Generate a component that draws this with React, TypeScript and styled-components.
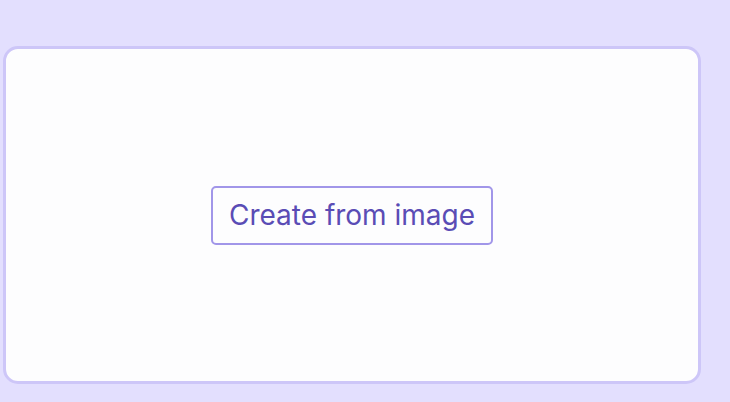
import React from "react";
import styled, { createGlobalStyle } from "styled-components";

const Global = createGlobalStyle`
  html, body { margin: 0; padding: 0; }
  body {
    background: #e3dffe;
    font-family: Inter, "Noto Sans", sans-serif;
    width: 730px;
    height: 402px;
    overflow: hidden;
  }
`;

const Page = styled.div`
  padding: 46px 29px 0 3px;
`;

const Card = styled.div`
  box-sizing: border-box;
  width: 698px;
  height: 338px;
  background: #fdfdfe;
  border: 3px solid #cdc6f8;
  border-radius: 15px;
  display: flex;
  align-items: center;
  justify-content: center;
`;

const Button = styled.button`
  box-sizing: border-box;
  height: 59px;
  width: 282px;
  padding: 0;
  background: transparent;
  border: 2px solid #a196e9;
  border-radius: 5px;
  color: #5a4cb5;
  font-family: Inter, "Noto Sans", sans-serif;
  font-size: 28px;
  font-weight: 400;
  cursor: pointer;
`;

export default function App() {
  return (
    <>
      <Global />
      <Page>
        <Card>
          <Button>Create from image</Button>
        </Card>
      </Page>
    </>
  );
}
